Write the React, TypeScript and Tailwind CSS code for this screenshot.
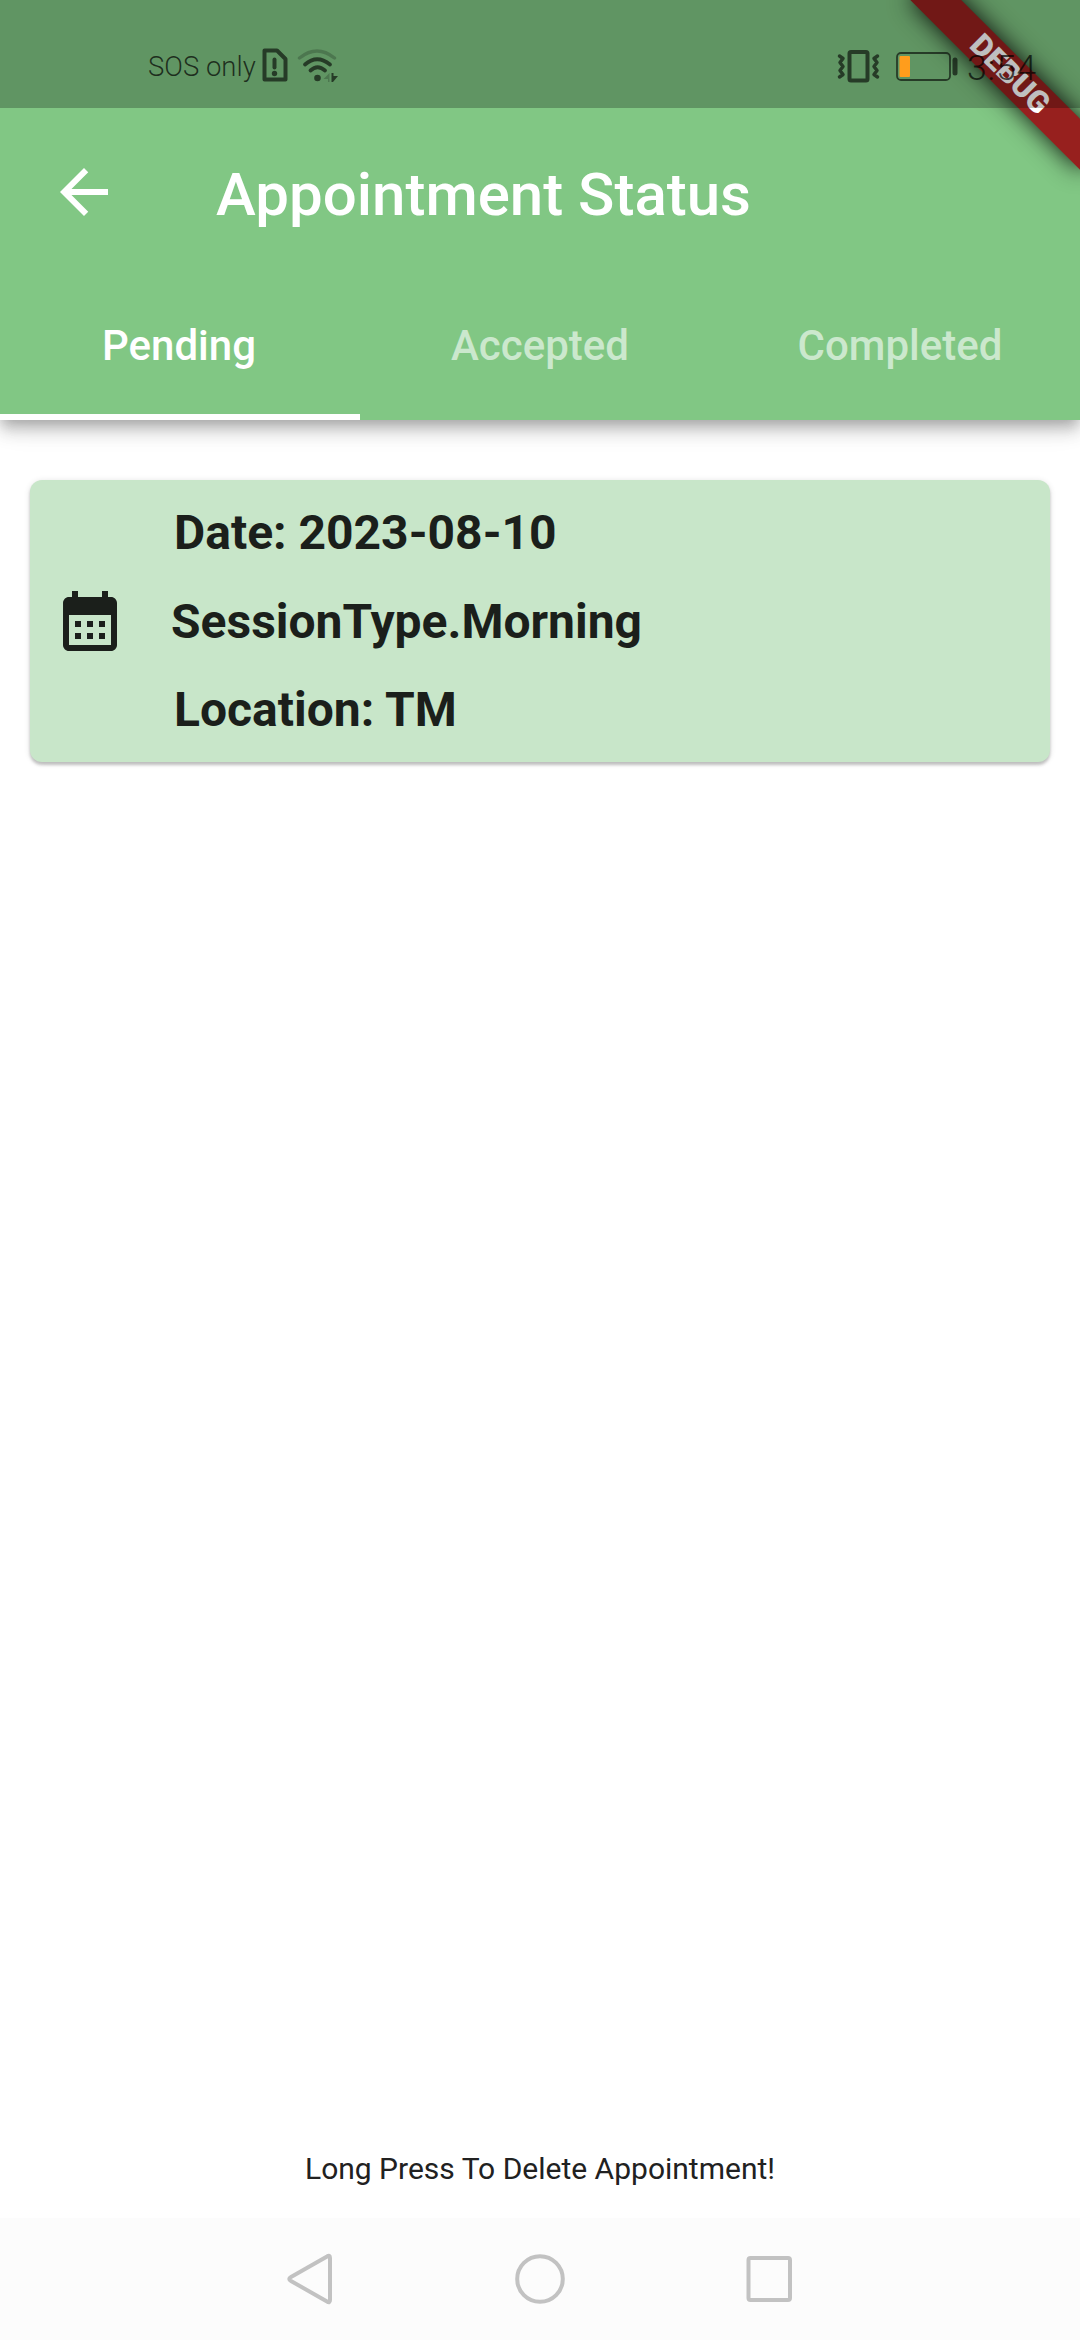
const INK = 'rgba(0,0,0,0.6)';

function StatusBar() {
  return (
    <div className="relative z-20 flex h-[108px] w-full bg-black/25">
      <div className="mt-[49px] ml-[148px] h-[36px] w-[110px] text-[27.5px] leading-[36px] font-light whitespace-nowrap text-black/70">
        SOS only
      </div>
      <svg className="mt-[48px] ml-[3px]" width="28" height="36" viewBox="0 0 28 36" fill="none" stroke={INK}>
        <path d="M4.500 3H17L25.500 11.500V32H4.500Z" strokeWidth="4" strokeLinejoin="round" transform="translate(-1 -.5)" />
        <path d="M13.500 11.500V19.500" strokeWidth="4" strokeLinecap="round" />
        <circle cx="13.500" cy="25.500" r="2.700" fill={INK} stroke="none" />
      </svg>
      <svg className="mt-[48px] ml-[8px]" width="42" height="36" viewBox="0 0 42 36" fill="none" strokeLinecap="round">
        <path d="M2.500 10Q20 -4 37.500 10" stroke="rgba(0,0,0,0.2)" strokeWidth="3.500" />
        <path d="M8 16.500Q20 6 33 16.500" stroke={INK} strokeWidth="3.800" />
        <path d="M13.500 22.500Q20.500 16 28 22.500" stroke={INK} strokeWidth="3.800" />
        <circle cx="20.500" cy="30" r="3.300" fill={INK} />
        <path d="M32.500 25V34H31V31H26.500Z" fill="rgba(0,0,0,0.2)" />
        <path d="M34.500 25V34H36L41 28H36.500V25Z" fill={INK} />
      </svg>
      <svg className="mt-[48px] ml-[498px]" width="46" height="36" viewBox="0 0 46 36" fill="none" stroke={INK} strokeLinejoin="round" strokeLinecap="round">
        <rect x="12.500" y="4" width="18" height="28.500" rx="1.500" strokeWidth="4" />
        <path d="M2.500 8L6 10.500L3 14.500L6 18.500L3 22.500L6 26.500L2.500 29M40.500 8L37 10.500L40 14.500L37 18.500L40 22.500L37 26.500L40.500 29" strokeWidth="3.500" />
      </svg>
      <svg className="mt-[50px] ml-[12px]" width="64" height="32" viewBox="0 0 64 32">
        <rect x="2" y="3" width="53" height="27" rx="4" fill="none" stroke={INK} strokeWidth="1.800" />
        <rect x="4.500" y="6" width="10.500" height="21" rx="1" fill="#ff9d1c" />
        <rect x="57.500" y="7.500" width="5" height="18" rx="2.500" fill={INK} />
      </svg>
      <div className="mt-[46px] ml-[8px] text-[35.5px] leading-[44px] font-light tracking-[0.9px] whitespace-nowrap text-black/70">3:54</div>
    </div>
  );
}

function DebugBanner() {
  return (
    <div className="absolute top-0 right-0 z-10 h-[320px] w-[320px] overflow-hidden">
      <div className="absolute top-0 left-[200px] h-[240px] w-[240px] origin-top rotate-45">
        <div className="mt-[84px] h-[36px] w-[240px] bg-[#97201e] pl-[6px] text-center text-[30.6px] leading-[35px] font-black text-white shadow-[0_0_24px_rgba(0,0,0,0.9)]">
          DEBUG
        </div>
      </div>
    </div>
  );
}

function AppBar() {
  return (
    <header className="relative h-[420px] w-full bg-[#81c784] shadow-[0_6px_12px_-3px_rgba(0,0,0,0.2),0_12px_15px_0_rgba(0,0,0,0.14),0_3px_30px_0_rgba(0,0,0,0.12)]">
      <StatusBar />
      <div className="flex h-[168px] items-center text-white">
        <svg className="ml-[48px]" width="72" height="72" viewBox="0 0 24 24" fill="currentColor">
          <path d="M20 11H7.830l5.590-5.590L12 4l-8 8 8 8 1.410-1.410L7.830 13H20v-2z" />
        </svg>
        <h1 className="mt-[6px] ml-[96px] text-[60px] leading-[72px] font-medium whitespace-nowrap">Appointment Status</h1>
      </div>
      <nav className="grid h-[144px] grid-cols-3 text-center text-[42px] leading-[140px] font-medium text-white/60">
        <div className="h-[144px] border-b-[6px] border-white pr-[2px] text-white">Pending</div>
        <div>Accepted</div>
        <div>Completed</div>
      </nav>
      <DebugBanner />
    </header>
  );
}

function AppointmentCard() {
  return (
    <section className="mx-[30px] mt-[60px] flex h-[282px] items-center rounded-[12px] bg-[#c8e6c9] text-[#1b1f1b] shadow-[0_3px_3px_rgba(0,0,0,0.2),0_1px_6px_rgba(0,0,0,0.12)]">
      <svg className="ml-[24px]" width="72" height="72" viewBox="0 0 24 24" fill="currentColor">
        <path d="M19 4h-1V2h-2v2H8V2H6v2H5c-1.110 0-1.990.9-1.990 2L3 20c0 1.100.89 2 2 2h14c1.100 0 2-.9 2-2V6c0-1.100-.9-2-2-2zm0 16H5V10h14v10zM9 14H7v-2h2v2zm4 0h-2v-2h2v2zm4 0h-2v-2h2v2zm-8 4H7v-2h2v2zm4 0h-2v-2h2v2zm4 0h-2v-2h2v2z" />
      </svg>
      <div className="mt-[2px] ml-[45px] text-[48px] leading-[88.500px] font-bold whitespace-nowrap">
        <div className="pl-[3px]">Date: 2023-08-10</div>
        <div>SessionType.Morning</div>
        <div className="pl-[3px]">Location: TM</div>
      </div>
    </section>
  );
}

function NavigationBar() {
  return (
    <footer className="flex h-[122px] items-center justify-center gap-[180px] bg-[#fcfcfc]">
      <svg className="-translate-x-px" width="50" height="56" viewBox="0 0 50 56" fill="none" stroke="#c2c2c2" strokeWidth="4">
        <path d="M43 5.500Q46 3.500 46 7V49Q46 52.500 43 50.500L7 30Q3.500 28 7 26Z" />
      </svg>
      <svg width="50" height="50" viewBox="0 0 50 50" fill="none" stroke="#c2c2c2" strokeWidth="4">
        <circle cx="25" cy="25" r="22.800" />
      </svg>
      <svg width="50" height="50" viewBox="0 0 50 50" fill="none" stroke="#c2c2c2" strokeWidth="4">
        <rect x="3.500" y="4" width="41.500" height="42" rx="2" />
      </svg>
    </footer>
  );
}

export default function App() {
  return (
    <div className="flex h-[2340px] w-[1080px] flex-col overflow-hidden bg-white font-['Roboto',sans-serif]">
      <AppBar />
      <main className="flex flex-1 flex-col">
        <AppointmentCard />
        <p className="mt-auto mb-[31px] text-center text-[30px] leading-[36px] text-[#212121]">Long Press To Delete Appointment!</p>
      </main>
      <NavigationBar />
    </div>
  );
}
